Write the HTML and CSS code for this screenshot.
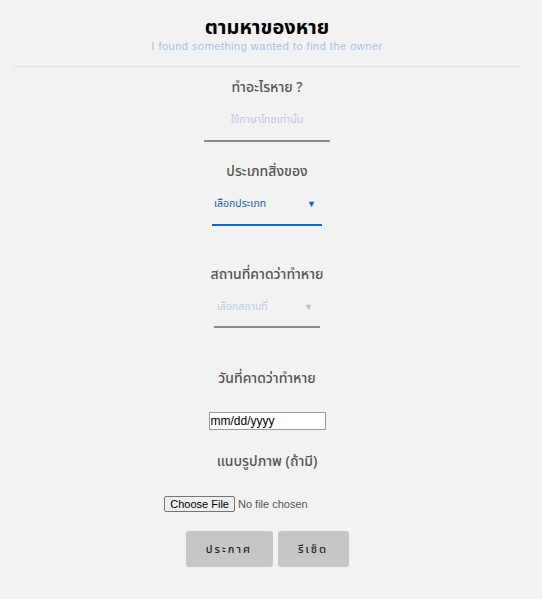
FILE: index.html
```html
<!DOCTYPE html>
<html lang="th">
<head>
<meta charset="utf-8">
<title>ตามหาของหาย</title>
<link rel="stylesheet" href="styles.css">
</head>
<body>
<div class="page">
  <header class="head">
    <h1 class="title">ตามหาของหาย</h1>
    <p class="subtitle">I found something wanted to find the owner</p>
  </header>
  <hr class="divider">
  <form class="form">
    <div class="field">
      <label class="label">ทำอะไรหาย ?</label>
      <input class="text-input" type="text" placeholder="ใช้ภาษาไทยเท่านั้น">
    </div>
    <div class="field f-type">
      <label class="label">ประเภทสิ่งของ</label>
      <div class="select select-active">
        <select class="select-el"><option>เลือกประเภท</option></select>
        <span class="arrow">▼</span>
      </div>
    </div>
    <div class="field f-place">
      <label class="label">สถานที่คาดว่าทำหาย</label>
      <div class="select select-muted">
        <select class="select-el"><option>เลือกสถานที่</option></select>
        <span class="arrow">▼</span>
      </div>
    </div>
    <div class="field f-date">
      <label class="label">วันที่คาดว่าทำหาย</label>
      <input class="date-input" type="text" value="mm/dd/yyyy">
    </div>
    <div class="field f-file">
      <label class="label">แนบรูปภาพ (ถ้ามี)</label>
      <div class="file-row">
        <button type="button" class="file-btn">Choose File</button>
        <span class="file-text">No file chosen</span>
      </div>
    </div>
    <div class="actions">
      <button type="submit" class="btn btn-post">ประกาศ</button>
      <button type="reset" class="btn btn-reset">รีเซ็ต</button>
    </div>
  </form>
</div>
</body>
</html>
```
FILE: styles.css
```css
html, body {
  margin: 0;
  padding: 0;
  background: #f2f2f2;
}
body {
  font-family: "Noto Sans Thai", "Noto Sans", "Liberation Sans", sans-serif;
}
.page {
  width: 534px;
}
.head {
  padding-top: 17px;
  text-align: center;
}
.title {
  margin: 0;
  font-size: 20px;
  line-height: 22px;
  font-weight: 700;
  color: #000;
}
.subtitle {
  margin: 1px 0 0;
  font-family: "Liberation Sans", Arial, sans-serif;
  font-size: 11px;
  line-height: 12px;
  letter-spacing: 0.5px;
  color: #a9bee0;
}
.divider {
  margin: 14px 14px 0;
  border: 0;
  border-top: 1px solid #dfdfdf;
  height: 0;
}
.form {
  display: flex;
  flex-direction: column;
  align-items: center;
  padding-top: 11px;
}
.field {
  display: flex;
  flex-direction: column;
  align-items: center;
}
.label {
  font-size: 14px;
  line-height: 20px;
  font-weight: 500;
  color: #555;
}
.text-input {
  margin-top: 2px;
  width: 126px;
  height: 40px;
  box-sizing: content-box;
  padding: 0;
  border: 0;
  border-bottom: 2px solid #8a8a8a;
  background: transparent;
  text-align: center;
  font-family: inherit;
  font-size: 10.5px;
  outline: none;
}
.text-input::placeholder {
  color: #bcc4e6;
}
.f-type { margin-top: 20px; }
.f-place { margin-top: 39px; }
.f-date { margin-top: 41px; }
.f-file { margin-top: 22px; }
.select {
  display: flex;
  align-items: center;
  border-bottom: 2px solid #888;
}
.select-el {
  appearance: none;
  -webkit-appearance: none;
  flex: 1;
  border: 0;
  background: transparent;
  font-family: inherit;
  font-size: 10.5px;
  padding: 0;
  outline: none;
}
.arrow {
  font-size: 9px;
}
.select-active {
  margin-top: 2px;
  width: 110px;
  height: 40px;
  border-bottom-color: #2563b0;
}
.select-active .select-el { color: #2160ae; padding-left: 2px; }
.select-active .arrow { color: #1f5fae; margin-right: 6px; }
.select-muted {
  margin-top: 3px;
  width: 106px;
  height: 38px;
  border-bottom-color: #8a8a8a;
}
.select-muted .select-el { color: #bccbe6; padding-left: 3px; }
.select-muted .arrow { color: #b7c1d2; margin-right: 7px; }
.date-input {
  margin-top: 23px;
  box-sizing: border-box;
  width: 117px;
  height: 18px;
  padding: 0 1px;
  border: 1px solid #9a9a9a;
  background: #fff;
  font-family: "Liberation Sans", Arial, sans-serif;
  font-size: 12px;
  color: #000;
  outline: none;
}
.file-row {
  margin-top: 24px;
  display: flex;
  align-items: center;
  gap: 3px;
  margin-left: -62px;
}
.file-btn {
  height: 16px;
  padding: 0 5px;
  border: 1px solid #767676;
  border-radius: 2px;
  background: #efefef;
  font-family: "Liberation Sans", Arial, sans-serif;
  font-size: 11px;
  line-height: 14px;
  color: #000;
}
.file-text {
  font-family: "Liberation Sans", Arial, sans-serif;
  font-size: 11px;
  color: #555;
}
.actions {
  margin-top: 19px;
  display: flex;
  gap: 5px;
}
.btn {
  height: 36px;
  border: 0;
  border-radius: 3px;
  background: #c6c6c6;
  font-family: inherit;
  font-size: 11px;
  font-weight: 500;
  letter-spacing: 2px;
  color: #222;
  padding: 0;
}
.btn-post { width: 87px; }
.btn-reset { width: 71px; }
```
